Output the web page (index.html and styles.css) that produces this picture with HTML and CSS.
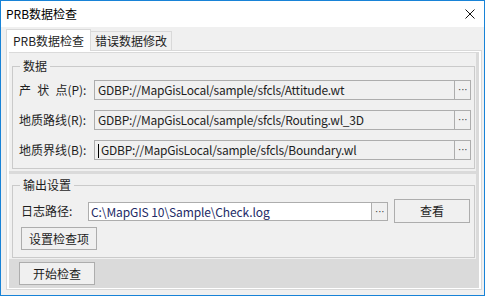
FILE: index.html
```html
<!doctype html>
<html>
<head>
<meta charset="utf-8">
<title>PRB数据检查</title>
<link rel="stylesheet" href="styles.css">
</head>
<body>
<div class="window">
  <div class="titlebar">
    <span class="title">PRB数据检查</span>
    <svg class="close" width="10" height="10" viewBox="0 0 10 10"><path d="M0.5 0.5L9.5 9.5M9.5 0.5L0.5 9.5" stroke="#111" stroke-width="1" fill="none"/></svg>
  </div>
  <div class="client">
    <div class="tabs">
      <div class="tab active">PRB数据检查</div>
      <div class="tab">错误数据修改</div>
    </div>
    <div class="page">
      <div class="page-inner">
        <div class="panel panel-data">
          <fieldset class="group">
            <legend>数据</legend>
            <div class="row">
              <label class="label spaced">产 状 点(P):</label>
              <div class="field"><span class="value">GDBP://MapGisLocal/sample/sfcls/Attitude.wt</span><span class="more">···</span></div>
            </div>
            <div class="row">
              <label class="label">地质路线(R):</label>
              <div class="field"><span class="value">GDBP://MapGisLocal/sample/sfcls/Routing.wl_3D</span><span class="more">···</span></div>
            </div>
            <div class="row">
              <label class="label">地质界线(B):</label>
              <div class="field"><span class="value"><span class="caret"></span>GDBP://MapGisLocal/sample/sfcls/Boundary.wl</span><span class="more">···</span></div>
            </div>
          </fieldset>
        </div>
        <div class="panel panel-out">
          <fieldset class="group group-out">
            <legend>输出设置</legend>
            <div class="row row-log">
              <label class="label label-log">日志路径:</label>
              <div class="field field-log"><span class="value">C:\MapGIS 10\Sample\Check.log</span><span class="more">···</span></div>
              <button class="btn btn-view">查看</button>
            </div>
            <button class="btn btn-items">设置检查项</button>
          </fieldset>
        </div>
        <div class="footer">
          <button class="btn">开始检查</button>
        </div>
      </div>
    </div>
  </div>
</div>
</body>
</html>
```

FILE: styles.css
```css
* { box-sizing: border-box; }
body {
  margin: 0;
  background: #fff;
  font-family: "Noto Sans CJK SC", "Noto Sans", sans-serif;
  font-size: 12px;
  line-height: 16px;
  color: #1e1e1e;
}
.window {
  width: 485px;
  height: 296px;
  border: 1px solid #1883d7;
  background: #f0f0f0;
  display: flex;
  flex-direction: column;
}
.titlebar {
  height: 26px;
  background: #fff;
  display: flex;
  align-items: center;
  padding-left: 5px;
}
.title { color: #000; }
.close { margin-left: auto; margin-right: 9px; }

.client {
  flex: 1;
  display: flex;
  flex-direction: column;
  padding: 2px 2px 5px 5px;
}
.tabs {
  display: flex;
  align-items: flex-end;
  height: 21px;
}
.tab {
  height: 19px;
  width: 81px;
  border: 1px solid #d9d9d9;
  border-bottom: 0;
  border-left: 0;
  padding-top: 1px;
  text-align: center;
  background: #f0f0f0;
}
.tab.active {
  height: 22px;
  width: 85px;
  margin-bottom: -1px;
  border-left: 1px solid #d9d9d9;
  padding-top: 3px;
  background: #fff;
  position: relative;
}
.page {
  flex: 1;
  display: flex;
  border: 1px solid #d9d9d9;
  padding: 1px 2px;
  background: #fff;
}
.page-inner {
  flex: 1;
  display: flex;
  flex-direction: column;
  background: #dadada;
  padding: 1px 3px 0 0;
}
.panel {
  background: #f0f0f0;
  padding: 5px 1px 2px 3px;
}
.panel-out {
  margin-top: 3px;
  padding: 3px 1px 1px 3px;
}
.group {
  margin: 0;
  min-width: 0;
  border: 1px solid #cacaca;
  padding: 6px 3px 8px 6px;
}
.group legend {
  padding: 0 3px;
  margin-left: 1px;
  line-height: 16px;
}
.group-out { padding: 6px 3px 7px 8px; }
.group-out legend { margin-left: -1px; }

.row {
  display: flex;
  align-items: center;
  height: 20px;
}
.row + .row { margin-top: 10px; }
.label { width: 75px; flex: none; }
.spaced { word-spacing: 3.5px; }
.field {
  flex: 1;
  height: 20px;
  display: flex;
  align-items: stretch;
  border: 1px solid #adadad;
  background: #f0f0f0;
}
.value {
  flex: 1;
  padding-left: 3px;
  line-height: 18px;
  letter-spacing: -0.25px;
  white-space: nowrap;
  overflow: hidden;
}
.caret {
  display: inline-block;
  width: 1px;
  height: 14px;
  margin-right: 2px;
  vertical-align: -3px;
  background: #000;
}
.more {
  width: 16px;
  flex: none;
  border-left: 1px solid #adadad;
  text-align: center;
  font-family: "Liberation Sans", sans-serif;
  font-size: 11px;
  line-height: 17px;
  letter-spacing: -0.5px;
  color: #444;
}

.row-log { height: 24px; }
.label-log { width: 67px; }
.field-log {
  flex: none;
  width: 300px;
  height: 19px;
  background: #fff;
}
.field-log .value { padding-left: 2px; line-height: 17px; letter-spacing: -0.1px; color: #222a66; }
.field-log .more { background: #f0f0f0; line-height: 16px; }

.btn {
  font: inherit;
  color: inherit;
  width: 76px;
  height: 23px;
  padding: 0;
  border: 1px solid #adadad;
  background: #f0f0f0;
}
.btn-view { height: 24px; margin-left: 6px; }
.btn-items { display: block; margin-top: 4px; }
.footer { padding: 3px 0 0 10px; }
```
